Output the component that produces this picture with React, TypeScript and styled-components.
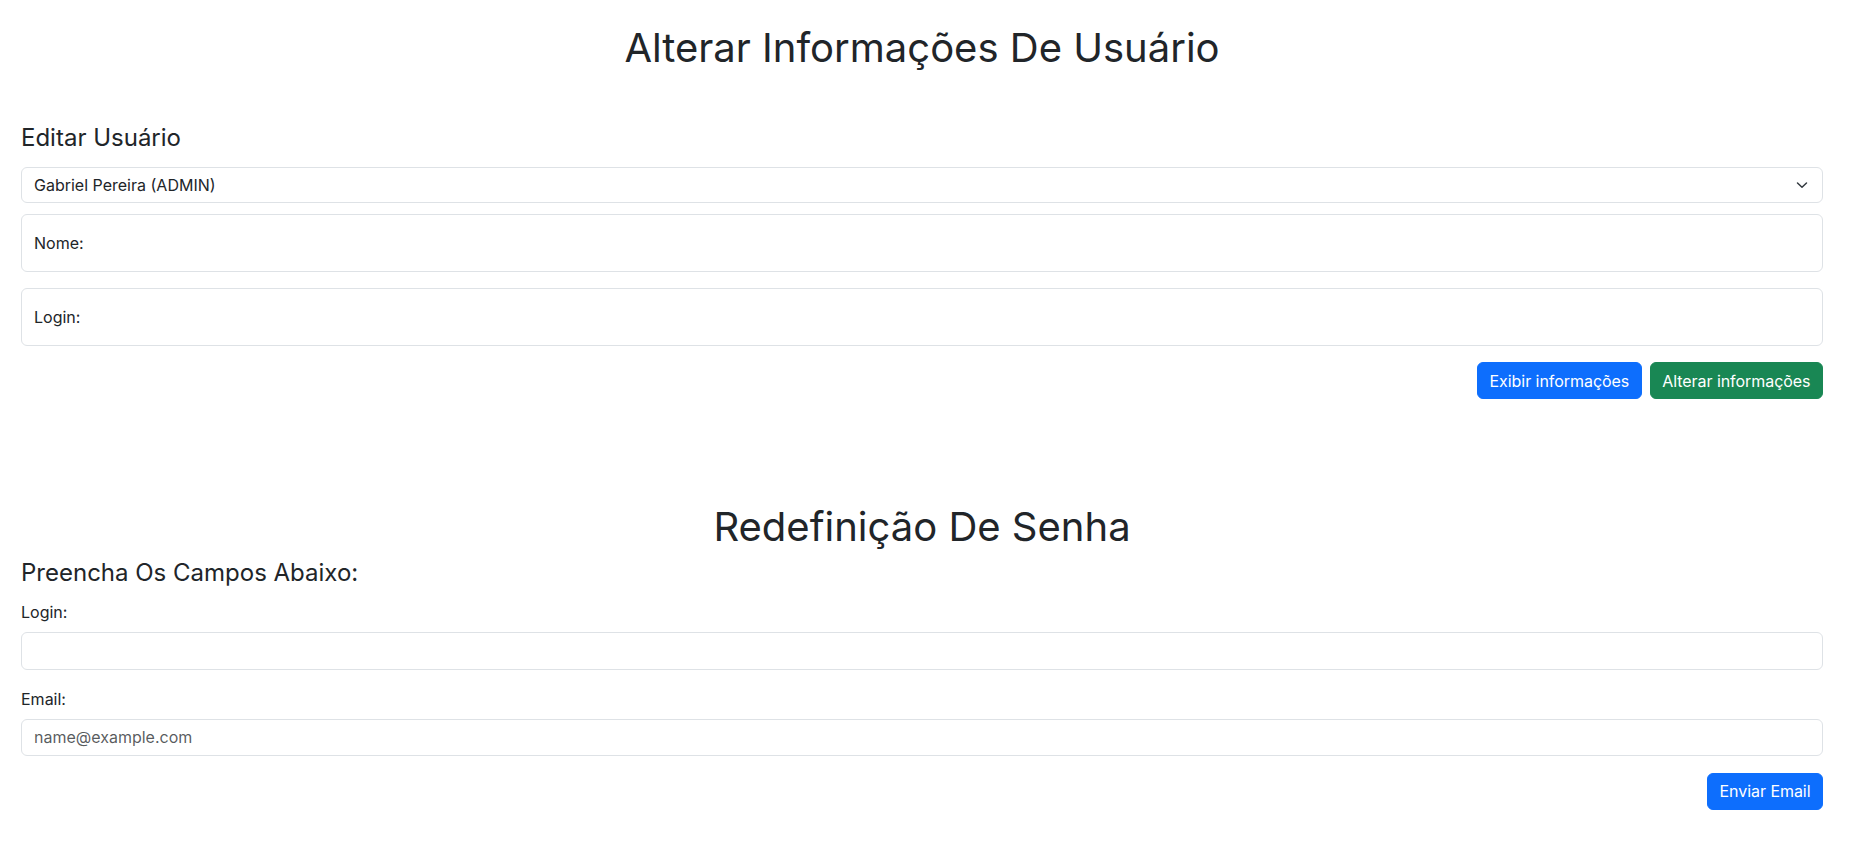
import React from "react";
import styled, { createGlobalStyle } from "styled-components";

const GlobalStyle = createGlobalStyle`
  *, *::before, *::after { box-sizing: border-box; }
  html, body { margin: 0; padding: 0; background: #ffffff; }
  body {
    font-family: Inter, "Noto Sans", "Liberation Sans", sans-serif;
    font-size: 16px;
    line-height: 1.5;
    color: #212529;
    -webkit-font-smoothing: antialiased;
  }
`;

const Page = styled.main`
  padding: 24px 29px 0 21px;
  display: flex;
  flex-direction: column;
`;

const Title = styled.h1<{ $mb: number }>`
  margin: 0 0 ${(p) => p.$mb}px;
  font-size: 40px;
  font-weight: 400;
  line-height: 1.2;
  text-align: center;
  color: #212529;
`;

const Subtitle = styled.h4<{ $mb: number }>`
  margin: 0 0 ${(p) => p.$mb}px;
  font-size: 24px;
  font-weight: 400;
  line-height: 1.2;
  color: #212529;
`;

const SelectWrap = styled.div`
  position: relative;
  margin-bottom: 11.5px;
`;

const Select = styled.select`
  display: block;
  width: 100%;
  height: 36px;
  padding: 0 36px 0 12px;
  font-family: inherit;
  font-size: 16px;
  color: #212529;
  background: #fff;
  border: 1px solid #dee2e6;
  border-radius: 6px;
  appearance: none;
  -webkit-appearance: none;
  outline: none;
`;

const Chevron = styled.svg`
  position: absolute;
  right: 15px;
  top: 50%;
  width: 12px;
  height: 8px;
  transform: translateY(-50%);
  pointer-events: none;
`;

const Floating = styled.div<{ $mb: number }>`
  position: relative;
  margin-bottom: ${(p) => p.$mb}px;
`;

const FloatInput = styled.input`
  display: block;
  width: 100%;
  height: 57.5px;
  padding: 0 12px;
  font-family: inherit;
  font-size: 16px;
  color: #212529;
  background: #fff;
  border: 1px solid #dee2e6;
  border-radius: 6px;
  outline: none;
`;

const FloatLabel = styled.label`
  position: absolute;
  left: 13px;
  top: 0;
  bottom: 0;
  display: flex;
  align-items: center;
  font-size: 16px;
  color: #212529;
  pointer-events: none;
`;

const ButtonRow = styled.div<{ $mb: number }>`
  display: flex;
  justify-content: flex-end;
  gap: 8px;
  margin-bottom: ${(p) => p.$mb}px;
`;

const Button = styled.button<{ $variant: "primary" | "success" }>`
  height: 37.5px;
  padding: 0 11.5px;
  font-family: inherit;
  font-size: 16px;
  font-weight: 400;
  line-height: 1.5;
  letter-spacing: -0.05px;
  color: #fff;
  background: ${(p) => (p.$variant === "primary" ? "#0d6efd" : "#198754")};
  border: 1px solid ${(p) => (p.$variant === "primary" ? "#0d6efd" : "#198754")};
  border-radius: 6px;
  cursor: pointer;
`;

const Label = styled.label<{ $mb: number }>`
  display: block;
  font-size: 16px;
  line-height: 24px;
  margin-bottom: ${(p) => p.$mb}px;
  color: #212529;
`;

const Input = styled.input<{ $mb: number }>`
  display: block;
  width: 100%;
  height: 37.4px;
  padding: 0 12px;
  margin-bottom: ${(p) => p.$mb}px;
  font-family: inherit;
  font-size: 16px;
  color: #212529;
  background: #fff;
  border: 1px solid #dee2e6;
  border-radius: 6px;
  outline: none;
  &::placeholder {
    color: rgba(33, 37, 41, 0.75);
  }
`;

export default function App() {
  return (
    <>
      <GlobalStyle />
      <Page>
        <Title $mb={52}>Alterar Informações De Usuário</Title>
        <Subtitle $mb={14}>Editar Usuário</Subtitle>
        <SelectWrap>
          <Select defaultValue="1">
            <option value="1">Gabriel Pereira (ADMIN)</option>
          </Select>
          <Chevron viewBox="0 0 12 8">
            <path
              d="M1.5 2 6 6.2 10.5 2"
              fill="none"
              stroke="#343a40"
              strokeWidth="1.5"
              strokeLinecap="round"
              strokeLinejoin="round"
            />
          </Chevron>
        </SelectWrap>
        <Floating $mb={16.5}>
          <FloatInput id="nome" type="text" />
          <FloatLabel htmlFor="nome">Nome:</FloatLabel>
        </Floating>
        <Floating $mb={16.2}>
          <FloatInput id="login1" type="text" />
          <FloatLabel htmlFor="login1">Login:</FloatLabel>
        </Floating>
        <ButtonRow $mb={103.5}>
          <Button $variant="primary">Exibir informações</Button>
          <Button $variant="success">Alterar informações</Button>
        </ButtonRow>

        <Title $mb={8}>Redefinição De Senha</Title>
        <Subtitle $mb={12.7}>Preencha Os Campos Abaixo:</Subtitle>
        <Label htmlFor="login2" $mb={8}>Login:</Label>
        <Input id="login2" type="text" $mb={17.5} />
        <Label htmlFor="email" $mb={7.3}>Email:</Label>
        <Input id="email" type="email" placeholder="name@example.com" $mb={16.6} />
        <ButtonRow $mb={0}>
          <Button $variant="primary">Enviar Email</Button>
        </ButtonRow>
      </Page>
    </>
  );
}
